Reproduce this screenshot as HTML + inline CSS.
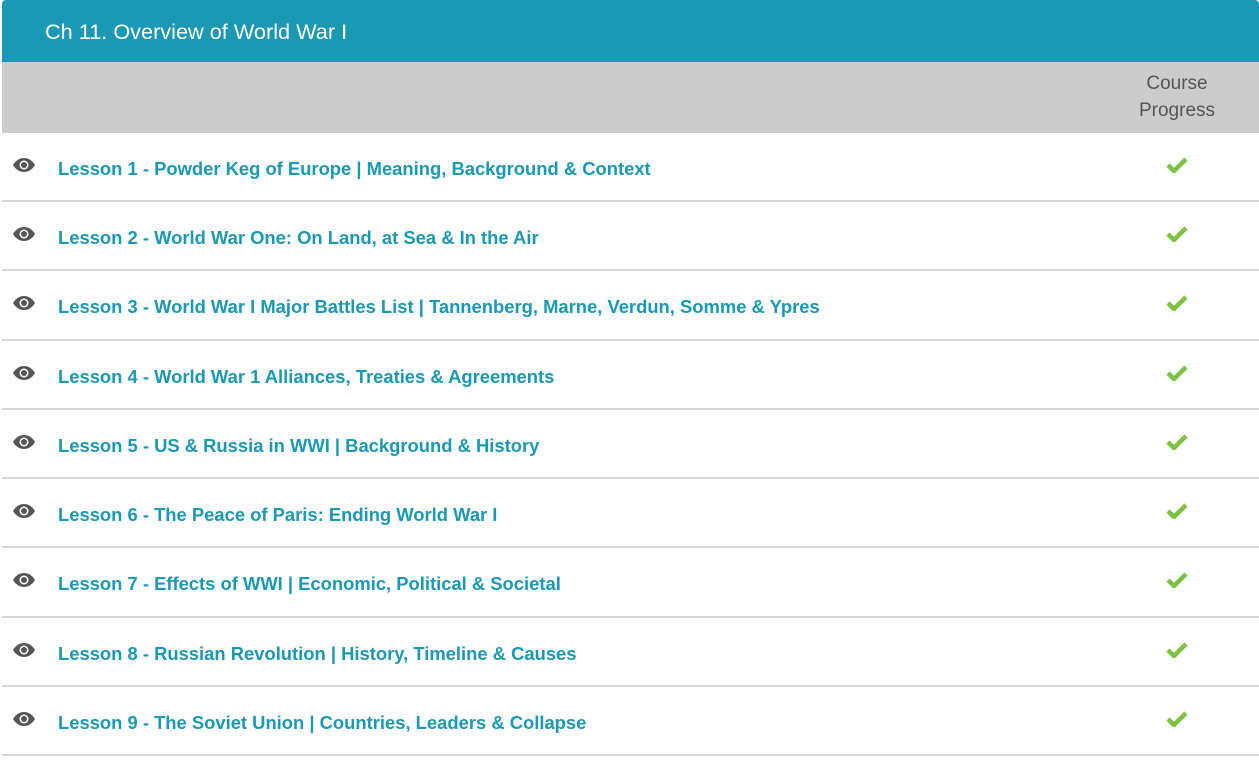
<!DOCTYPE html>
<html><head><meta charset="utf-8"><style>
body{margin:0;background:#fff;font-family:"Liberation Sans",sans-serif;width:1259px;height:768px;overflow:hidden}
.wrap{position:absolute;left:2px;top:0;width:1257px}
.hd{height:62px;background:#1a98b4;border-radius:4px 4px 0 0;color:#fff;font-size:21.7px;line-height:64px;padding-left:43px;box-sizing:border-box}
.sub{height:71px;background:#cccccc;position:relative}
.sub div{position:absolute;left:1120px;width:110px;top:8px;text-align:center;color:#555;font-size:19px;line-height:27px}
.row{height:69px;border-bottom:2px solid #d6d6d6;position:relative;box-sizing:border-box}
.row svg.eye{position:absolute;left:10px;top:24px}
.row a{position:absolute;left:56px;top:25px;color:#1a98b4;font-weight:bold;font-size:18.4px;text-decoration:none}
.row svg.ck{position:absolute;left:1164px;top:24px}
</style></head><body><div class="wrap">
<div class="hd">Ch 11. Overview of World War I</div>
<div class="sub"><div>Course Progress</div></div>
</div>
<div style="position:absolute;left:2px;top:133px;width:1257px">
<div class="row"><svg class="eye" width="24" height="16" viewBox="0 0 24 16"><path d="M1 8C4 3 8 1 12 1s8 2 11 7c-3 5-7 7-11 7S4 13 1 8z" fill="#555"/><circle cx="12" cy="8" r="4.5" fill="#fff"/><circle cx="12" cy="8" r="3" fill="#555"/></svg><a>Lesson 1 - Powder Keg of Europe | Meaning, Background &amp; Context</a><svg class="ck" width="22" height="16" viewBox="0 0 22 16"><path d="M2 8l6 6L20 2" stroke="#7dc242" stroke-width="4.5" fill="none"/></svg></div>
<div class="row"><svg class="eye" width="24" height="16" viewBox="0 0 24 16"><path d="M1 8C4 3 8 1 12 1s8 2 11 7c-3 5-7 7-11 7S4 13 1 8z" fill="#555"/><circle cx="12" cy="8" r="4.5" fill="#fff"/><circle cx="12" cy="8" r="3" fill="#555"/></svg><a>Lesson 2 - World War One: On Land, at Sea &amp; In the Air</a><svg class="ck" width="22" height="16" viewBox="0 0 22 16"><path d="M2 8l6 6L20 2" stroke="#7dc242" stroke-width="4.5" fill="none"/></svg></div>
<div class="row" style="height:70px"><svg class="eye" width="24" height="16" viewBox="0 0 24 16"><path d="M1 8C4 3 8 1 12 1s8 2 11 7c-3 5-7 7-11 7S4 13 1 8z" fill="#555"/><circle cx="12" cy="8" r="4.5" fill="#fff"/><circle cx="12" cy="8" r="3" fill="#555"/></svg><a>Lesson 3 - World War I Major Battles List | Tannenberg, Marne, Verdun, Somme &amp; Ypres</a><svg class="ck" width="22" height="16" viewBox="0 0 22 16"><path d="M2 8l6 6L20 2" stroke="#7dc242" stroke-width="4.5" fill="none"/></svg></div>
<div class="row"><svg class="eye" width="24" height="16" viewBox="0 0 24 16"><path d="M1 8C4 3 8 1 12 1s8 2 11 7c-3 5-7 7-11 7S4 13 1 8z" fill="#555"/><circle cx="12" cy="8" r="4.5" fill="#fff"/><circle cx="12" cy="8" r="3" fill="#555"/></svg><a>Lesson 4 - World War 1 Alliances, Treaties &amp; Agreements</a><svg class="ck" width="22" height="16" viewBox="0 0 22 16"><path d="M2 8l6 6L20 2" stroke="#7dc242" stroke-width="4.5" fill="none"/></svg></div>
<div class="row"><svg class="eye" width="24" height="16" viewBox="0 0 24 16"><path d="M1 8C4 3 8 1 12 1s8 2 11 7c-3 5-7 7-11 7S4 13 1 8z" fill="#555"/><circle cx="12" cy="8" r="4.5" fill="#fff"/><circle cx="12" cy="8" r="3" fill="#555"/></svg><a>Lesson 5 - US &amp; Russia in WWI | Background &amp; History</a><svg class="ck" width="22" height="16" viewBox="0 0 22 16"><path d="M2 8l6 6L20 2" stroke="#7dc242" stroke-width="4.5" fill="none"/></svg></div>
<div class="row"><svg class="eye" width="24" height="16" viewBox="0 0 24 16"><path d="M1 8C4 3 8 1 12 1s8 2 11 7c-3 5-7 7-11 7S4 13 1 8z" fill="#555"/><circle cx="12" cy="8" r="4.5" fill="#fff"/><circle cx="12" cy="8" r="3" fill="#555"/></svg><a>Lesson 6 - The Peace of Paris: Ending World War I</a><svg class="ck" width="22" height="16" viewBox="0 0 22 16"><path d="M2 8l6 6L20 2" stroke="#7dc242" stroke-width="4.5" fill="none"/></svg></div>
<div class="row" style="height:70px"><svg class="eye" width="24" height="16" viewBox="0 0 24 16"><path d="M1 8C4 3 8 1 12 1s8 2 11 7c-3 5-7 7-11 7S4 13 1 8z" fill="#555"/><circle cx="12" cy="8" r="4.5" fill="#fff"/><circle cx="12" cy="8" r="3" fill="#555"/></svg><a>Lesson 7 - Effects of WWI | Economic, Political &amp; Societal</a><svg class="ck" width="22" height="16" viewBox="0 0 22 16"><path d="M2 8l6 6L20 2" stroke="#7dc242" stroke-width="4.5" fill="none"/></svg></div>
<div class="row"><svg class="eye" width="24" height="16" viewBox="0 0 24 16"><path d="M1 8C4 3 8 1 12 1s8 2 11 7c-3 5-7 7-11 7S4 13 1 8z" fill="#555"/><circle cx="12" cy="8" r="4.5" fill="#fff"/><circle cx="12" cy="8" r="3" fill="#555"/></svg><a>Lesson 8 - Russian Revolution | History, Timeline &amp; Causes</a><svg class="ck" width="22" height="16" viewBox="0 0 22 16"><path d="M2 8l6 6L20 2" stroke="#7dc242" stroke-width="4.5" fill="none"/></svg></div>
<div class="row"><svg class="eye" width="24" height="16" viewBox="0 0 24 16"><path d="M1 8C4 3 8 1 12 1s8 2 11 7c-3 5-7 7-11 7S4 13 1 8z" fill="#555"/><circle cx="12" cy="8" r="4.5" fill="#fff"/><circle cx="12" cy="8" r="3" fill="#555"/></svg><a>Lesson 9 - The Soviet Union | Countries, Leaders &amp; Collapse</a><svg class="ck" width="22" height="16" viewBox="0 0 22 16"><path d="M2 8l6 6L20 2" stroke="#7dc242" stroke-width="4.5" fill="none"/></svg></div>
</div>
</body></html>
